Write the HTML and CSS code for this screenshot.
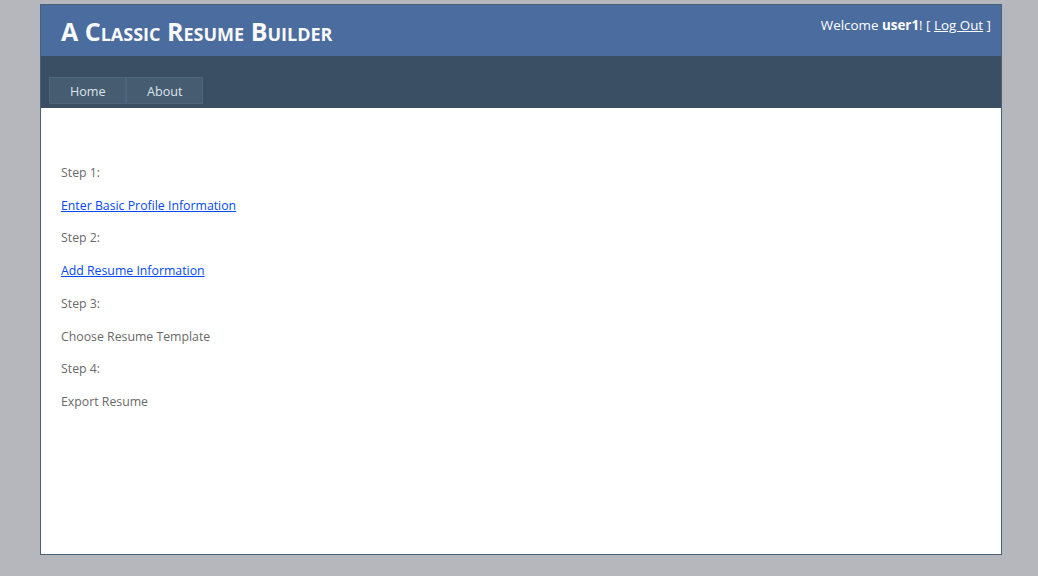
FILE: index.html
```html
<!DOCTYPE html>
<html>
<head>
<meta charset="utf-8">
<link rel="stylesheet" href="styles.css">
<title>A Classic Resume Builder</title>
</head>
<body>
<div class="page">
  <div class="header">
    <h1 class="title">A Classic Resume Builder</h1>
    <div class="login">Welcome <b>user1</b>! [ <a href="#">Log Out</a> ]</div>
  </div>
  <div class="navbar">
    <ul class="menu">
      <li><a href="#">Home</a></li>
      <li><a href="#">About</a></li>
    </ul>
  </div>
  <div class="main">
    <p>Step 1:</p>
    <p><a class="link" href="#">Enter Basic Profile Information</a></p>
    <p>Step 2:</p>
    <p><a class="link" href="#">Add Resume Information</a></p>
    <p>Step 3:</p>
    <p>Choose Resume Template</p>
    <p>Step 4:</p>
    <p>Export Resume</p>
  </div>
</div>
</body>
</html>
```
FILE: styles.css
```css
html, body {
  margin: 0;
  padding: 0;
}
body {
  background: #b6b7bc;
  font-family: "Open Sans", "Noto Sans", "DejaVu Sans", sans-serif;
  font-size: 12.3px;
  color: #696969;
}
.page {
  width: 960px;
  height: 549px;
  margin: 4px 0 0 40px;
  background: #fff;
  border: 1px solid #496077;
}
.header {
  background: #4b6c9e;
  display: flex;
  justify-content: space-between;
  align-items: flex-start;
  height: 51px;
}
.title {
  margin: 0;
  padding: 0 0 0 20px;
  color: #f9f9f9;
  font-size: 25px;
  line-height: 53px;
  font-weight: 700;
  font-variant: small-caps;
}
.login {
  padding: 10px 10px 0 0;
  color: #fff;
  font-size: 13.4px;
  line-height: 21px;
}
.login a {
  color: #fff;
}
.navbar {
  background: #3a4f63;
  height: 52px;
  box-sizing: border-box;
  padding: 21px 0 0 8px;
}
.menu {
  list-style: none;
  margin: 0;
  padding: 0;
  display: flex;
}
.menu a {
  display: block;
  background: #465c71;
  border: 1px solid #4e667d;
  color: #dde4ec;
  text-decoration: none;
  padding: 5px 20px 3px;
  line-height: 17px;
  font-size: 12.6px;
  width: 35px;
  text-align: center;
  white-space: nowrap;
}
.main {
  padding: 55px 20px 0 20px;
}
.main p {
  margin: 0 0 13px 0;
  line-height: 19.7px;
}
.link {
  color: #034af3;
}
```
